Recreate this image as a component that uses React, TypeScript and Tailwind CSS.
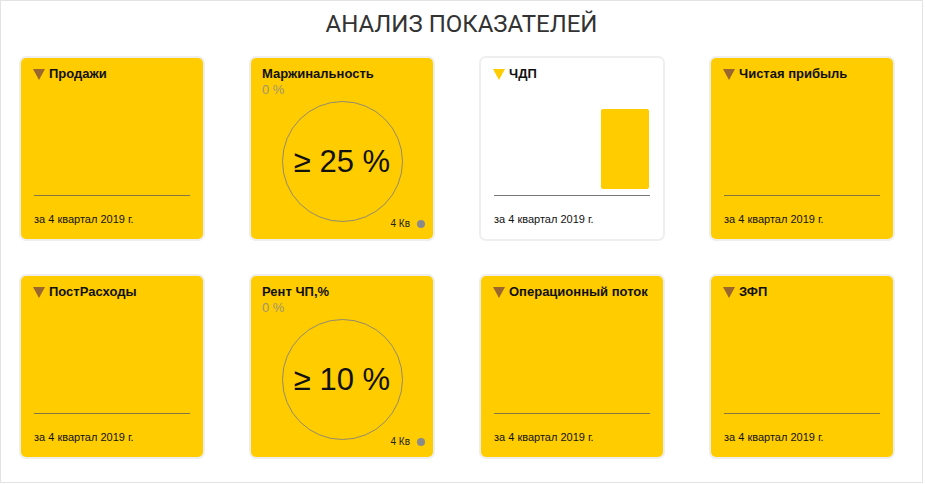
import React from 'react';

type Kind = 'empty' | 'gauge' | 'bar';

interface Indicator {
    title: string;
    kind: Kind;
    white?: boolean;
    target?: string;
}

const indicators: Indicator[] = [
    { title: 'Продажи', kind: 'empty' },
    { title: 'Маржинальность', kind: 'gauge', target: '≥ 25 %' },
    { title: 'ЧДП', kind: 'bar', white: true },
    { title: 'Чистая прибыль', kind: 'empty' },
    { title: 'ПостРасходы', kind: 'empty' },
    { title: 'Рент ЧП,%', kind: 'gauge', target: '≥ 10 %' },
    { title: 'Операционный поток', kind: 'empty' },
    { title: 'ЗФП', kind: 'empty' },
];

const Triangle: React.FC<{ yellow?: boolean }> = ({ yellow }) => (
    <span
        className={
            'inline-block w-0 h-0 border-l-[6px] border-r-[6px] border-t-[11px] border-l-transparent border-r-transparent ' +
            (yellow ? 'border-t-[#ffcc00]' : 'border-t-[#9a6630]')
        }
    />
);

const GaugeCard: React.FC<{ item: Indicator }> = ({ item }) => (
    <div className="relative h-full bg-[#ffcc00] rounded-[5px] px-[11px] pt-[8px]">
        <div className="text-[13px] leading-4 font-bold text-[#111]">{item.title}</div>
        <div className="text-[13px] leading-4 text-[#a09470]">0 %</div>
        <div className="mt-[3px] mx-auto w-[121px] h-[121px] rounded-full border border-[#928a72] flex items-center justify-center">
            <span className="text-[31px] leading-none text-[#111]">{item.target}</span>
        </div>
        {/* period badge */}
        <div className="absolute right-[8px] bottom-[9px] flex items-center gap-[7px]">
            <span className="text-[10px] leading-3 text-[#222]">4 Кв</span>
            <span className="w-[8px] h-[8px] rounded-full bg-[#8a8a8a]" />
        </div>
    </div>
);

const ValueCard: React.FC<{ item: Indicator }> = ({ item }) => (
    <div
        className={
            'h-full flex flex-col rounded-[5px] px-[13px] pt-[8px] pb-[13px] ' +
            (item.white ? 'bg-white' : 'bg-[#ffcc00]')
        }
    >
        <div className="flex items-center gap-[4px] -ml-[1px]">
            <Triangle yellow={item.white} />
            <span className="text-[13px] leading-4 font-bold text-[#111]">{item.title}</span>
        </div>
        <div className="flex-1 flex items-end justify-end pr-[1px] pb-[6px]">
            {item.kind === 'bar' && <div className="w-[48px] h-[80px] bg-[#ffcc00] rounded-[2px]" />}
        </div>
        <div className={'h-[1.5px] ' + (item.white ? 'bg-[#777]' : 'bg-[#857445]')} />
        <div className="mt-[16px] text-[11px] leading-[14px] text-[#111]">за 4 квартал 2019 г.</div>
    </div>
);

export default function App() {
    return (
        <div className="w-[923px] h-[483px] border border-[#e3e3e3] bg-white font-['Liberation_Sans',Arial,sans-serif]">
            <h1 className="h-[55px] pt-[9px] text-center text-[24px] leading-7 text-[#333] font-['Roboto',sans-serif] font-normal">
                АНАЛИЗ ПОКАЗАТЕЛЕЙ
            </h1>
            <div className="grid grid-cols-[repeat(4,186px)] auto-rows-[185px] gap-x-[44px] gap-y-[33px] pl-[18px]">
                {indicators.map(item => (
                    <div key={item.title} className="border-2 border-[#eeeeee] rounded-[7px]">
                        {item.kind === 'gauge' ? <GaugeCard item={item} /> : <ValueCard item={item} />}
                    </div>
                ))}
            </div>
        </div>
    );
}
